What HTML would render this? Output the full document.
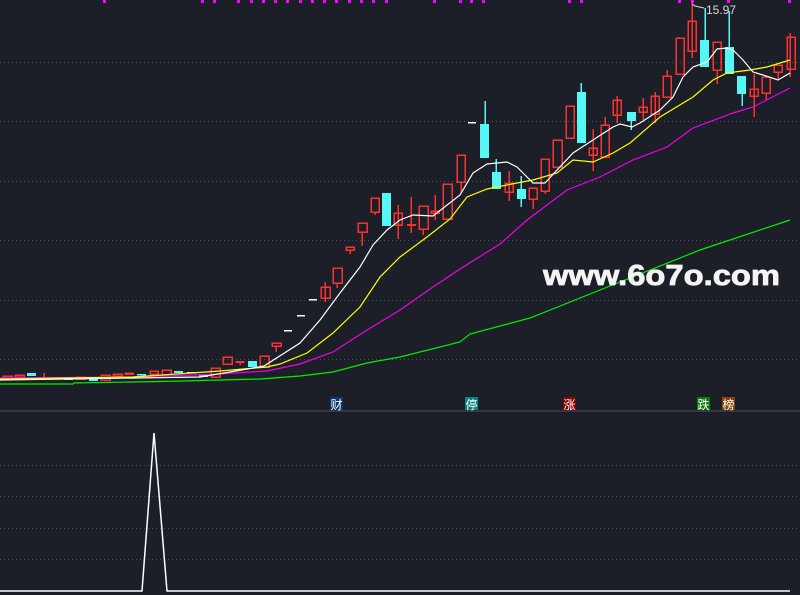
<!DOCTYPE html>
<html><head><meta charset="utf-8"><style>
html,body{margin:0;padding:0;background:#1c1f27;width:800px;height:595px;overflow:hidden}
svg{display:block}
.g{stroke:#4a4e58;stroke-width:1;stroke-dasharray:1 3}
.k{shape-rendering:crispEdges}
.r{fill:none;stroke:#ff3030;stroke-width:1.5}
.rw{stroke:#ff3030;stroke-width:1.5}
.c{fill:#55f7f7}
.cw{stroke:#55f7f7;stroke-width:1.5}
.lb{font:12px "Liberation Sans","Noto Sans CJK SC",sans-serif;fill:#fff}
</style></head><body>
<svg width="800" height="595" viewBox="0 0 800 595" xmlns="http://www.w3.org/2000/svg">
<rect width="800" height="595" fill="#1c1f27"/>
<g class="g">
<line x1="0" y1="62.5" x2="800" y2="62.5"/><line x1="0" y1="121.5" x2="800" y2="121.5"/>
<line x1="0" y1="181.5" x2="800" y2="181.5"/><line x1="0" y1="240.5" x2="800" y2="240.5"/>
<line x1="0" y1="300.5" x2="800" y2="300.5"/><line x1="0" y1="359.5" x2="800" y2="359.5"/>
<line x1="0" y1="465.5" x2="800" y2="465.5"/><line x1="0" y1="496.5" x2="800" y2="496.5"/>
<line x1="0" y1="528.5" x2="800" y2="528.5"/><line x1="0" y1="559.5" x2="800" y2="559.5"/>
</g>
<line x1="0" y1="411" x2="800" y2="411" stroke="#3c404a" stroke-width="1.5"/>
<g fill="#ff00ff">
<rect x="103" y="0" width="3" height="3"/><rect x="201" y="0" width="3" height="3"/><rect x="213" y="0" width="3" height="3"/>
<rect x="237" y="0" width="3" height="3"/><rect x="250" y="0" width="3" height="3"/><rect x="262" y="0" width="3" height="3"/>
<rect x="274" y="0" width="3" height="3"/><rect x="286" y="0" width="3" height="3"/><rect x="299" y="0" width="3" height="3"/>
<rect x="311" y="0" width="3" height="3"/><rect x="323" y="0" width="3" height="3"/><rect x="335" y="0" width="3" height="3"/>
<rect x="348" y="0" width="3" height="3"/><rect x="360" y="0" width="3" height="3"/><rect x="372" y="0" width="3" height="3"/>
<rect x="385" y="0" width="3" height="3"/><rect x="433" y="0" width="3" height="3"/><rect x="459" y="0" width="3" height="3"/>
<rect x="470" y="0" width="3" height="3"/><rect x="482" y="0" width="3" height="3"/><rect x="568" y="0" width="3" height="3"/>
<rect x="580" y="0" width="3" height="3"/><rect x="678" y="0" width="3" height="3"/><rect x="691" y="0" width="3" height="3"/>
<rect x="727" y="0" width="3" height="3"/><rect x="788" y="0" width="3" height="3"/>
</g>
<g class="k">
<rect class="r" x="3" y="376" width="9" height="2"/>
<rect class="r" x="15" y="375" width="9" height="2"/>
<rect class="c" x="27" y="373" width="9" height="3"/>
<line class="rw" x1="44" y1="373" x2="44" y2="377"/>
<rect fill="#fff" x="52" y="377" width="9" height="1.5"/>
<rect class="c" x="64" y="377" width="9" height="3"/>
<rect class="r" x="76" y="377" width="9" height="2"/>
<rect class="c" x="89" y="379" width="9" height="2"/>
<rect class="r" x="101" y="375" width="9" height="5"/>
<rect class="r" x="113" y="374" width="9" height="2"/>
<rect class="r" x="125" y="373" width="8" height="1"/>
<rect class="c" x="137" y="374" width="9" height="1.5"/>
<rect class="r" x="150" y="371" width="8" height="3"/>
<rect class="r" x="162" y="370" width="9" height="5"/>
<rect class="c" x="174" y="371" width="9" height="2"/>
<rect fill="#fff" x="187" y="372" width="9" height="1.5"/>
<rect class="c" x="199" y="374" width="9" height="3"/>
<rect class="r" x="211" y="368" width="9" height="9"/>
<rect class="r" x="223" y="357" width="9" height="7"/>
<line class="rw" x1="240" y1="361" x2="240" y2="365"/><rect fill="#ff3030" x="235.5" y="361" width="9" height="2"/>
<rect class="c" x="248" y="361" width="9" height="6"/>
<rect class="r" x="260" y="356" width="9" height="11"/>
<line class="rw" x1="276" y1="346" x2="276" y2="352"/><rect class="r" x="272" y="343" width="9" height="3"/>
<rect fill="#fff" x="284" y="330" width="8" height="1.5"/>
<rect fill="#fff" x="297" y="315" width="8" height="1.5"/>
<rect fill="#fff" x="309" y="299" width="8" height="1.5"/>
<line class="rw" x1="325" y1="282" x2="325" y2="302"/><rect class="r" x="321" y="287" width="9" height="11"/>
<line class="rw" x1="337" y1="283" x2="337" y2="288"/><rect class="r" x="333" y="268" width="9" height="15"/>
<line class="rw" x1="350" y1="250" x2="350" y2="254"/><rect class="r" x="346" y="247" width="8" height="3"/>
<line class="rw" x1="362" y1="232" x2="362" y2="246"/><rect class="r" x="358" y="223" width="9" height="9"/>
<line class="rw" x1="375" y1="212" x2="375" y2="215"/><rect class="r" x="371" y="198" width="8" height="14"/>
<line class="cw" x1="386" y1="193" x2="386" y2="226"/><rect class="c" x="382" y="193" width="9" height="33"/>
<line class="rw" x1="398" y1="205" x2="398" y2="239"/><rect class="r" x="394" y="213" width="8" height="12"/>
<line class="rw" x1="411" y1="197" x2="411" y2="233"/><rect fill="#ff3030" x="407" y="224" width="9" height="2"/>
<line class="rw" x1="423" y1="229" x2="423" y2="235"/><rect class="r" x="419" y="206" width="9" height="23"/>
<line class="rw" x1="435" y1="195" x2="435" y2="220"/><rect class="r" x="431" y="211" width="8" height="2"/>
<rect class="r" x="443" y="184" width="9" height="35"/>
<line class="rw" x1="461" y1="182" x2="461" y2="193"/><rect class="r" x="457" y="155" width="8" height="27"/>
<rect fill="#fff" x="468" y="122" width="8" height="1.5"/>
<line class="cw" x1="485" y1="101" x2="485" y2="158"/><rect class="c" x="480" y="124" width="9" height="34"/>
<line class="cw" x1="496" y1="159" x2="496" y2="189"/><rect class="c" x="492" y="172" width="9" height="17"/>
<line class="rw" x1="509" y1="171" x2="509" y2="201"/><rect class="r" x="505" y="183" width="8" height="9"/>
<line class="cw" x1="521" y1="176" x2="521" y2="207"/><rect class="c" x="517" y="189" width="9" height="10"/>
<line class="rw" x1="533" y1="199" x2="533" y2="209"/><rect class="r" x="529" y="188" width="8" height="11"/>
<line class="rw" x1="545" y1="191" x2="545" y2="194"/><rect class="r" x="541" y="159" width="8" height="32"/>
<rect class="r" x="553" y="140" width="9" height="27"/>
<rect class="r" x="566" y="106" width="8" height="32"/>
<line class="cw" x1="581" y1="83" x2="581" y2="143"/><rect class="c" x="577" y="92" width="9" height="51"/>
<line class="rw" x1="593" y1="129" x2="593" y2="171"/><rect class="r" x="589" y="148" width="8" height="7"/>
<line class="rw" x1="605" y1="117" x2="605" y2="125"/><rect class="r" x="601" y="125" width="8" height="32"/>
<line class="rw" x1="617" y1="96" x2="617" y2="123"/><rect class="r" x="613" y="100" width="8" height="15"/>
<line class="cw" x1="631" y1="112" x2="631" y2="130"/><rect class="c" x="627" y="112" width="9" height="9"/>
<line class="rw" x1="643" y1="98" x2="643" y2="120"/><rect class="r" x="639" y="107" width="8" height="5"/>
<line class="rw" x1="655" y1="92" x2="655" y2="123"/><rect class="r" x="651" y="96" width="8" height="18"/>
<line class="rw" x1="667" y1="70" x2="667" y2="76"/><rect class="r" x="663" y="76" width="8" height="21"/>
<line class="rw" x1="679" y1="37" x2="679" y2="38"/><rect class="r" x="676" y="38" width="8" height="36"/>
<line class="rw" x1="692" y1="3" x2="692" y2="58"/><rect class="r" x="688" y="21" width="8" height="30"/>
<line class="cw" x1="705" y1="8" x2="705" y2="67"/><rect class="c" x="700" y="40" width="9" height="27"/>
<line class="rw" x1="717" y1="70" x2="717" y2="84"/><rect class="r" x="713" y="42" width="8" height="28"/>
<line class="cw" x1="729" y1="11" x2="729" y2="74"/><rect class="c" x="725" y="47" width="9" height="27"/>
<line class="cw" x1="742" y1="94" x2="742" y2="106"/><rect class="c" x="737" y="76" width="9" height="18"/>
<line class="rw" x1="754" y1="74" x2="754" y2="117"/><rect class="r" x="750" y="89" width="8" height="7"/>
<line class="rw" x1="766" y1="93" x2="766" y2="100"/><rect class="r" x="762" y="77" width="8" height="16"/>
<line class="rw" x1="778" y1="72" x2="778" y2="80"/><rect class="r" x="774" y="65" width="8" height="7"/>
<line class="rw" x1="790" y1="33" x2="790" y2="77"/><rect class="r" x="787" y="37" width="8" height="32"/>
</g>
<polyline fill="none" stroke="#00ee00" stroke-width="1.2" points="0,384 73,384 74,383 133,382 183,381 220,380 260,379 300,376 333,372 367,363 400,357 460,342 470,334 530,318 600,290 700,250 790,220"/>
<polyline fill="none" stroke="#ee00ee" stroke-width="1.2" points="0,378 133,377 220,374 267,371 300,364 333,352 367,330 400,310 433,287 460,269 500,244 527,220 567,190 600,177 633,160 667,147 693,128 733,113 753,107 790,88"/>
<polyline fill="none" stroke="#ffff00" stroke-width="1.2" points="0,379 133,377 220,371 267,367 280,364 307,353 333,333 360,307 380,277 400,257 427,237 450,219 467,197 487,189 517,183 533,180 557,173 573,160 593,162 613,153 630,143 660,117 693,97 713,80 727,73 750,70 767,67 790,60"/>
<polyline fill="none" stroke="#ffffff" stroke-width="1.2" points="0,380 200,377 230,372 264,366 300,343 320,320 340,293 360,267 373,245 387,230 400,220 413,215 433,216 460,195 473,173 487,164 507,162 517,167 533,183 545,183 557,170 573,153 593,140 613,127 620,124 632,127 640,123 660,110 673,97 683,77 693,67 707,62 717,49 727,48 733,50 743,60 753,72 763,75 778,80 790,73"/>
<polyline fill="none" stroke="#ddd" stroke-width="1" points="692,4 695,6 704,8"/>
<text x="706" y="14" font-family="Liberation Sans,sans-serif" font-size="12" fill="#d8d8d8">15.97</text>
<text x="543" y="285" textLength="237" lengthAdjust="spacingAndGlyphs" font-family="Liberation Sans,sans-serif" font-weight="bold" font-size="29" fill="#f4f4f4" stroke="#f4f4f4" stroke-width="0.8">www.6o7o.com</text>
<rect x="330" y="397" width="13" height="13" fill="#0b3a6a"/><text class="lb" x="330.5" y="409">财</text>
<rect x="465" y="397" width="13" height="13" fill="#0a8585"/><text class="lb" x="465.5" y="409">停</text>
<rect x="563" y="397" width="13" height="13" fill="#860000"/><text class="lb" x="563.5" y="409">涨</text>
<rect x="697" y="397" width="13" height="13" fill="#0a7a0a"/><text class="lb" x="697.5" y="409">跌</text>
<rect x="722" y="397" width="13" height="13" fill="#8a4600"/><text class="lb" x="722.5" y="409">榜</text>
<polyline fill="none" stroke="#fff" stroke-width="1.5" points="0,591 142,591 154,433 167,591 790,591"/>
</svg>
</body></html>
